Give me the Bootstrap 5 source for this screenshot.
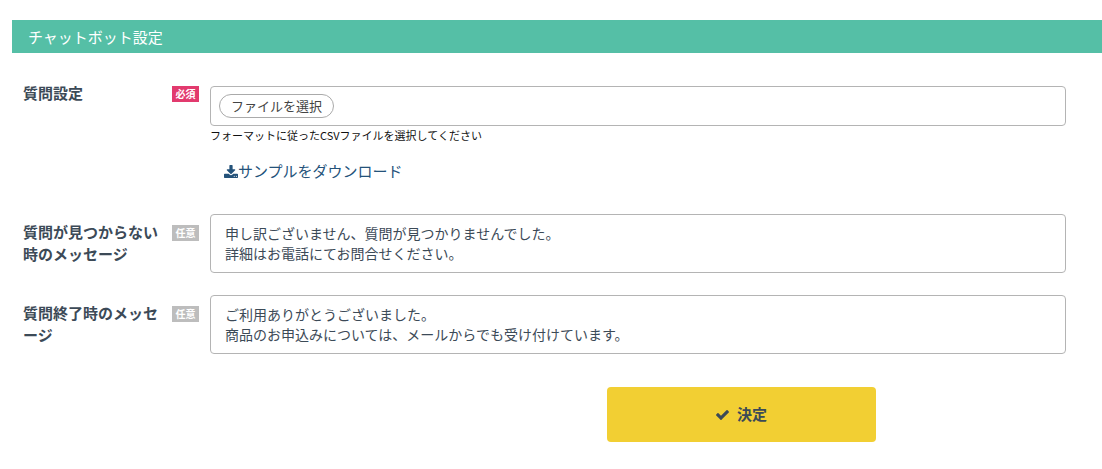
<!DOCTYPE html>
<html lang="ja">
<head>
<meta charset="utf-8">
<meta name="viewport" content="width=device-width, initial-scale=1">
<title>チャットボット設定</title>
<link href="https://cdn.jsdelivr.net/npm/bootstrap@5.3.0/dist/css/bootstrap.min.css" rel="stylesheet">
<style>
  body { font-family: "Noto Sans CJK JP", sans-serif; font-size: 14px; color: #3c4a57; background: #fff; }
  .settings-page { padding: 20px 0 20px 12px; }
  .section-title { background: #55bfa6; color: #fff; font-size: 15px; line-height: 33px; padding-left: 16px; margin-bottom: 22px; font-weight: 400; }
  .setting-row { padding: 0 36px 0 11px; margin-bottom: 22px; }
  .setting-label { width: 139px; padding-top: 7px; font-size: 15px; line-height: 22px; font-weight: 700; line-break: anywhere; }
  .setting-tag { width: 27px; margin: 11px 11px 0 10px; font-size: 10px; line-height: 16px; font-weight: 700; color: #fff; background: #bdbdbd; }
  .setting-tag.required { background: #e23a6e; }
  .setting-field { min-width: 0; }
  .file-box { margin-top: 11px; height: 40px; padding: 0 8px; border: 1px solid #b4b4b4; border-radius: 4px; }
  .file-btn { border: 1px solid #aaa; border-radius: 12px; padding: 0 11px; font-size: 13px; line-height: 22px; color: #444; cursor: pointer; }
  .file-help { font-size: 11px; line-height: 18px; color: #111; }
  .sample-link { margin: 16px 0 10px 14px; font-size: 15px; line-height: 22px; color: #24527a; }
  .message-box { height: 59px; padding: 8px 14px; font-size: 14px; line-height: 20px; color: #3c4a57; border-color: #b4b4b4; border-radius: 4px; resize: none; overflow: hidden; }
  .submit-row { padding-left: 369px; padding-top: 11px; }
  .submit-btn { width: 269px; height: 55px; font-size: 15px; font-weight: 700; border-radius: 4px; color: #3c4a57; background: #f2cf33; }
  .submit-btn:hover { color: #3c4a57; background: #e6c227; }
</style>
</head>
<body>
<main class="settings-page">
  <h1 class="section-title">チャットボット設定</h1>
  <form>
    <div class="setting-row d-flex align-items-start">
      <label class="setting-label flex-shrink-0" for="csv">質問設定</label>
      <span class="setting-tag required flex-shrink-0 text-center">必須</span>
      <div class="setting-field flex-grow-1">
        <div class="file-box d-flex align-items-center">
          <label class="file-btn" for="csv">ファイルを選択</label>
          <input class="visually-hidden" type="file" id="csv" accept=".csv" aria-describedby="csvHelp">
        </div>
        <div class="file-help" id="csvHelp">フォーマットに従ったCSVファイルを選択してください</div>
        <a class="sample-link d-inline-flex align-items-center text-decoration-none" href="#"><svg width="14" height="13" viewBox="0 0 1664 1536" fill="currentColor" aria-hidden="true"><path d="M1280 1344q0-26-19-45t-45-19-45 19-19 45 19 45 45 19 45-19 19-45zm256 0q0-26-19-45t-45-19-45 19-19 45 19 45 45 19 45-19 19-45zm128-224v320q0 40-28 68t-68 28h-1472q-40 0-68-28t-28-68v-320q0-40 28-68t68-28h465l135 136q58 56 136 56t136-56l136-136h464q40 0 68 28t28 68zm-325-569q17 41-14 70l-448 448q-18 19-45 19t-45-19l-448-448q-31-29-14-70 17-39 59-39h256v-448q0-26 19-45t45-19h256q26 0 45 19t19 45v448h256q42 0 59 39z"/></svg>サンプルをダウンロード</a>
      </div>
    </div>
    <div class="setting-row d-flex align-items-start">
      <label class="setting-label flex-shrink-0" for="notFound">質問が見つからない時のメッセージ</label>
      <span class="setting-tag flex-shrink-0 text-center">任意</span>
      <div class="setting-field flex-grow-1">
        <textarea class="form-control message-box" id="notFound">申し訳ございません、質問が見つかりませんでした。
詳細はお電話にてお問合せください。</textarea>
      </div>
    </div>
    <div class="setting-row d-flex align-items-start">
      <label class="setting-label flex-shrink-0" for="finished">質問終了時のメッセージ</label>
      <span class="setting-tag flex-shrink-0 text-center">任意</span>
      <div class="setting-field flex-grow-1">
        <textarea class="form-control message-box" id="finished">ご利用ありがとうございました。
商品のお申込みについては、メールからでも受け付けています。</textarea>
      </div>
    </div>
    <div class="submit-row d-flex justify-content-center">
      <button class="btn submit-btn d-flex align-items-center justify-content-center gap-2" type="submit"><svg width="13" height="10" viewBox="121 334 1550 1188" fill="currentColor" aria-hidden="true"><path d="M1671 566q0 40-28 68l-724 724-136 136q-28 28-68 28t-68-28l-136-136-362-362q-28-28-28-68t28-68l136-136q28-28 68-28t68 28l294 295 656-657q28-28 68-28t68 28l136 136q28 28 28 68z"/></svg>決定</button>
    </div>
  </form>
</main>
<script src="https://cdn.jsdelivr.net/npm/bootstrap@5.3.0/dist/js/bootstrap.bundle.min.js"></script>
</body>
</html>
